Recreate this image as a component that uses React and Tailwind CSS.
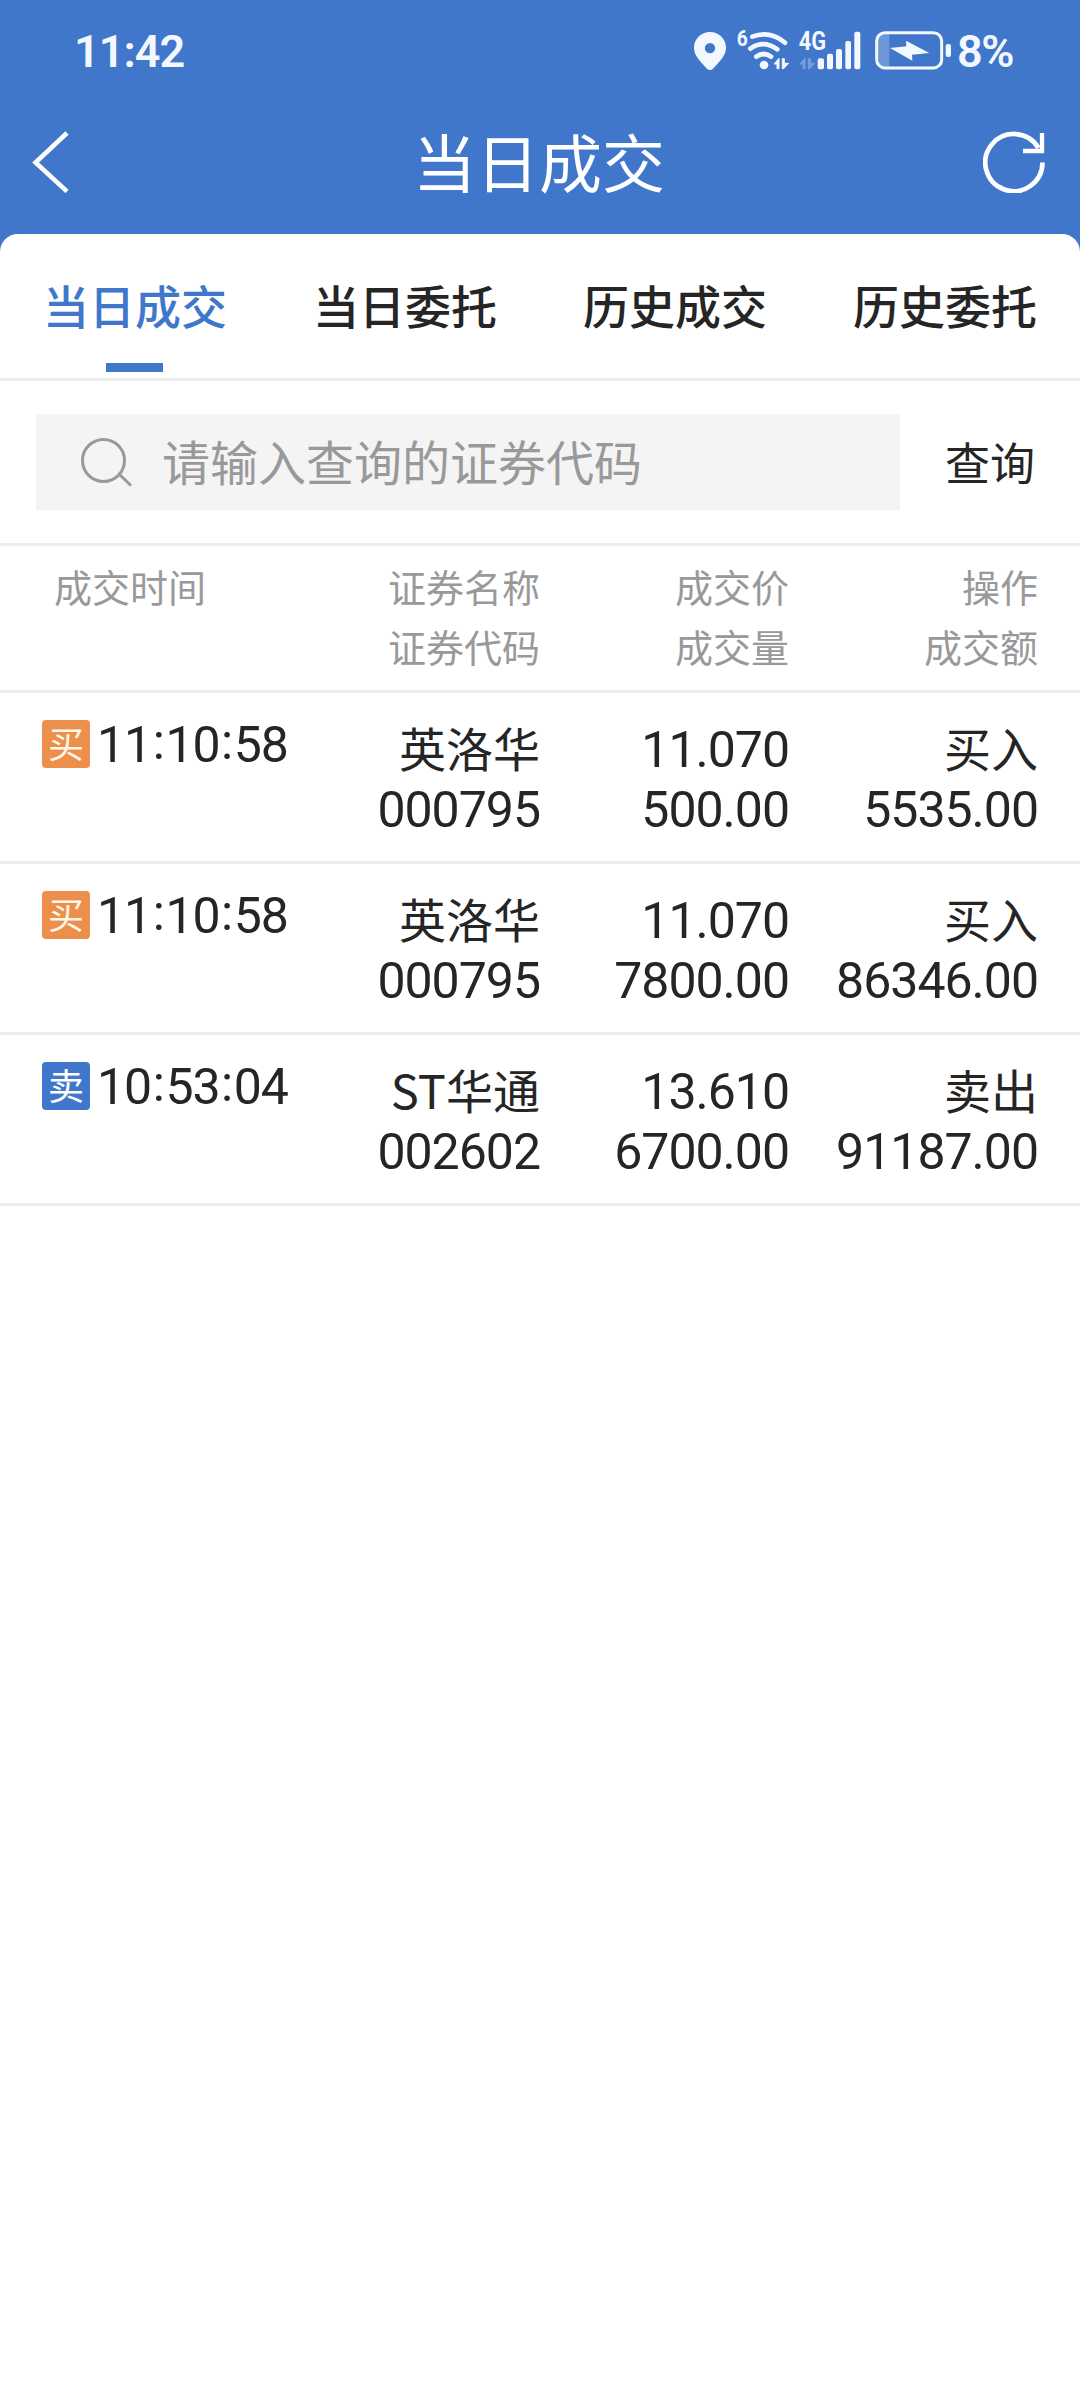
import React from 'react';

const tabs = ['当日成交', '当日委托', '历史成交', '历史委托'];

const trades = [
  { side: 'buy', time: '11:10:58', name: '英洛华', code: '000795', price: '11.070', volume: '500.00', action: '买入', amount: '5535.00' },
  { side: 'buy', time: '11:10:58', name: '英洛华', code: '000795', price: '11.070', volume: '7800.00', action: '买入', amount: '86346.00' },
  { side: 'sell', time: '10:53:04', name: 'ST华通', code: '002602', price: '13.610', volume: '6700.00', action: '卖出', amount: '91187.00' },
];

function StatusBar() {
  return (
    <div className="h-[100px] pl-[74px] pr-[67px] flex items-center justify-between text-[#f3f8ff] font-['Roboto',sans-serif] font-semibold text-[45px]">
      <span className="pt-[3px] leading-none tracking-[-1px]">11:42</span>
      <div className="flex items-center">
        <svg width="32" height="42" viewBox="42 57 96 126" fill="currentColor">
          <path fillRule="evenodd" d="M90 66c-27 0-48 21-48 47 0 23 18 40 39 63q9 8 18 0c21-23 39-40 39-63 0-26-21-47-48-47zm0 33a15 15 0 1 1 0 31 15 15 0 0 1 0-31z" />
        </svg>
        <svg className="ml-[8px] overflow-visible" width="56" height="42" viewBox="162 57 168 126" fill="none" stroke="currentColor">
          <text x="170" y="109" fontSize="66" fontWeight="700" textLength="33" lengthAdjust="spacingAndGlyphs" fill="currentColor" stroke="none">6</text>
          <path d="M217 80Q270 60 315 98M211 116Q250 88 292 118M229 140Q251 124 273 140" strokeWidth="14" strokeLinecap="round" />
          <circle cx="252" cy="165" r="13" fill="currentColor" stroke="none" />
          <path d="M282 162l15-17v31h-6v-14zM307 146h6v14h13l-15 16h-4z" fill="currentColor" strokeWidth="3" strokeLinejoin="round" />
        </svg>
        <svg className="ml-[8px] overflow-visible" width="64" height="42" viewBox="354 57 192 126" fill="currentColor">
          <text x="356" y="121" fontSize="76" fontWeight="700" textLength="82" lengthAdjust="spacingAndGlyphs">4G</text>
          <path opacity=".3" d="M360 162l15-17v31h-6v-14zM385 146h6v14h13l-15 16h-4z" stroke="currentColor" strokeWidth="3" strokeLinejoin="round" />
          <rect x="413" y="145" width="19" height="33" rx="6" />
          <rect x="441" y="131" width="18" height="47" rx="6" />
          <rect x="468" y="117" width="18" height="61" rx="6" />
          <rect x="496" y="93" width="17" height="85" rx="6" />
          <rect x="523" y="65" width="18" height="113" rx="6" />
        </svg>
        <svg className="ml-[13px]" width="77" height="42" viewBox="585 57 231 126" fill="currentColor">
          <path opacity=".25" d="M628 72v98h-15q-19 0-19-22v-54q0-22 19-22z" />
          <rect x="590" y="68" width="195" height="106" rx="25" fill="none" stroke="currentColor" strokeWidth="9" />
          <path d="M630 114l49-5-1-17 70 37-52 5 1 18z" />
          <rect x="797" y="102" width="16" height="39" rx="7" />
        </svg>
        <span className="ml-[5px] pt-[3px] leading-none tracking-[-1.5px]">8%</span>
      </div>
    </div>
  );
}

function NavBar() {
  return (
    <div className="h-[134px] px-[32px] pb-[10px] flex items-center justify-between text-white">
      <svg width="65" height="62" viewBox="0 0 65 62" fill="none" stroke="currentColor" strokeWidth="4.5">
        <path d="M35 2L3.5 31.5 35 60.500" />
      </svg>
      <h1 className="pb-[5px] pr-[2px] text-[63px] leading-none">当日成交</h1>
      <svg width="65" height="62" viewBox="0 0 65 62" fill="none" stroke="currentColor" strokeWidth="4.7">
        <path d="M59.500 31.500A28.600 28.600 0 1 1 55.500 17" />
        <path d="M59 2v18H40" strokeWidth="4.300" />
      </svg>
    </div>
  );
}

function SearchBar() {
  return (
    <div className="h-[165px] pl-[36px] border-b-[3px] border-[#eeeeee] flex items-center">
      <div className="w-[864px] h-[96px] pl-[44px] bg-[#f4f4f4] text-[#999999] flex items-center">
        <svg width="54" height="54" viewBox="0 0 54 54" fill="none" stroke="currentColor" strokeWidth="3">
          <circle cx="23.500" cy="25.500" r="21" />
          <path d="M40 40l11 10.500" />
        </svg>
        <span className="ml-[28px] pb-[5px] text-[48px] leading-none">请输入查询的证券代码</span>
      </div>
      <button className="flex-1 pb-[2px] text-center text-[45px] leading-none">查询</button>
    </div>
  );
}

function Num({ children }) {
  return <div className="h-[60px] font-['Roboto',sans-serif] text-[50px] tracking-[-1px]">{children}</div>;
}

function TradeRow({ trade }) {
  const buy = trade.side === 'buy';
  return (
    <div className="h-[171px] pl-[42px] pr-[42px] pt-[27px] border-b-[3px] border-[#eeeeee] grid grid-cols-[248px_250px_249px_249px] text-right leading-[60px] text-[47px]">
      <div className="flex items-start">
        <span className={`w-[48px] h-[48px] rounded-[4px] shrink-0 text-center text-[36px] leading-[44px] ${buy ? 'bg-[#ec8f4c] text-[#fff8e6]' : 'bg-[#4077cb] text-white'}`}>
          {buy ? '买' : '卖'}
        </span>
        <span className="ml-[7px] font-['Roboto',sans-serif] text-[50px] leading-[50px] tracking-[-1.1px] whitespace-nowrap">
          {trade.time.split(':').map((part, i) => (
            <React.Fragment key={i}>
              {i > 0 && <span className="relative -top-[3px] px-[1.700px]">:</span>}
              {part}
            </React.Fragment>
          ))}
        </span>
      </div>
      <div>
        <div className="-mt-[3px] mb-[3px]">{trade.name}</div>
        <Num>{trade.code}</Num>
      </div>
      <div>
        <Num>{trade.price}</Num>
        <Num>{trade.volume}</Num>
      </div>
      <div>
        <div className="-mt-[3px] mb-[3px]">{trade.action}</div>
        <Num>{trade.amount}</Num>
      </div>
    </div>
  );
}

export default function App() {
  return (
    <div className="w-[1080px] h-[2400px] overflow-hidden flex flex-col bg-[#4077cb] text-[#252525] font-['Noto_Sans_CJK_SC',sans-serif]">
      <StatusBar />
      <NavBar />
      <main className="flex-1 bg-white rounded-t-[18px]">
        <nav className="h-[147px] border-b-[3px] border-[#eeeeee] grid grid-cols-4">
          {tabs.map((tab, i) => (
            <div key={tab} className={`flex flex-col items-center justify-between pt-[47px] pb-[6px] text-[46px] font-medium leading-none ${i === 0 ? 'text-[#4077cb]' : ''}`}>
              {tab}
              {i === 0 && <span className="w-[57px] h-[9px] mr-[1px] bg-[#4077cb]"></span>}
            </div>
          ))}
        </nav>
        <SearchBar />
        <div className="h-[147px] pl-[54px] pr-[42px] pt-[10px] border-b-[3px] border-[#eeeeee] grid grid-cols-[236px_250px_249px_249px] text-right text-[38px] leading-[60px] text-[#999999]">
          <div className="text-left">成交时间</div>
          <div>证券名称<br />证券代码</div>
          <div>成交价<br />成交量</div>
          <div>操作<br />成交额</div>
        </div>
        {trades.map((trade, i) => (
          <TradeRow key={i} trade={trade} />
        ))}
      </main>
    </div>
  );
}
